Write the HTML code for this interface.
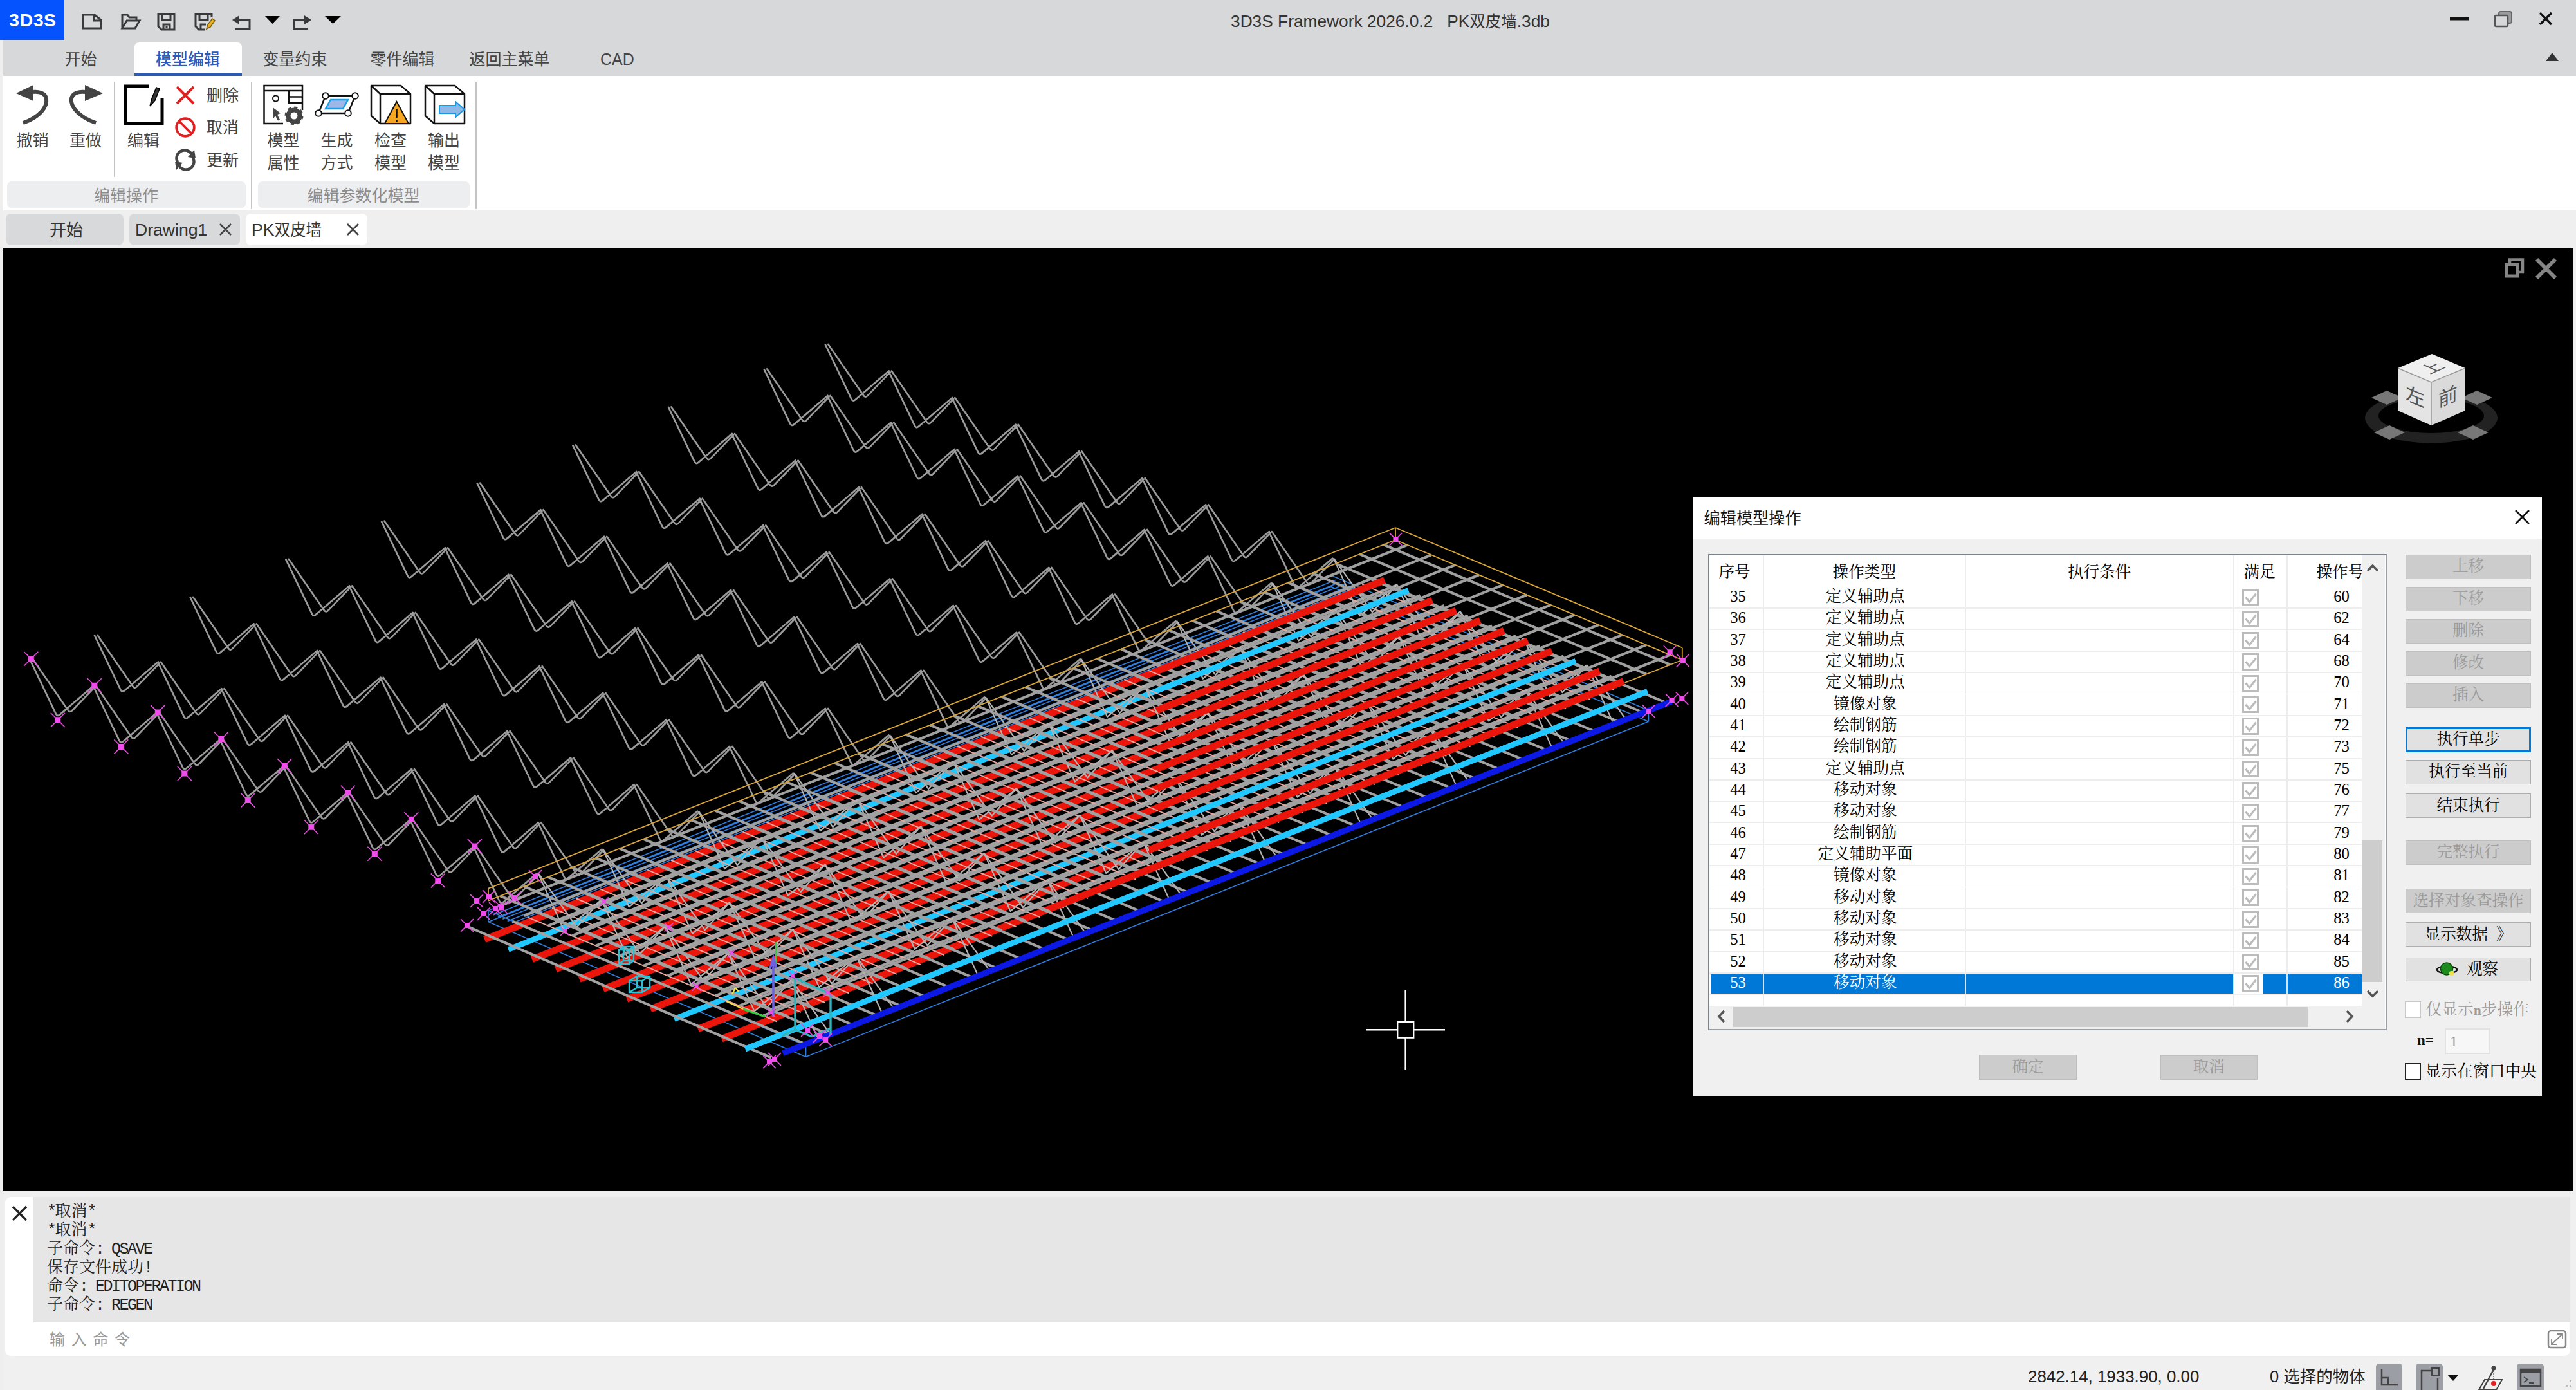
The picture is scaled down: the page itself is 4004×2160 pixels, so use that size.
<!DOCTYPE html>
<html lang="zh-CN"><head><meta charset="utf-8"><title>3D3S Framework 2026.0.2 PK双皮墙.3db</title>
<style>
*{box-sizing:border-box;margin:0;padding:0}
html,body{width:4004px;height:2160px;overflow:hidden;background:#f0f0f0}
body{position:relative;font-family:"Liberation Sans","Noto Sans CJK SC",sans-serif;color:#222;}
.a{position:absolute}
.t{position:absolute;white-space:nowrap;line-height:1}
.ui{font-family:"Liberation Sans","Noto Sans CJK SC",sans-serif}
.song{font-family:"Liberation Serif","Noto Serif CJK SC",serif}
.m{font-family:"Liberation Mono",monospace;display:inline-block;letter-spacing:-2.5px;white-space:pre}
</style></head>
<body>
<div class="a" style="left:0;top:0;width:4004px;height:118px;background:#d6d8da"></div>
<div class="a" style="left:0;top:62px;width:5px;height:2098px;background:#eeeeef"></div>
<div class="a" style="left:0;top:0;width:100px;height:62px;background:#0453ff"></div>
<div class="t ui" style="left:14px;top:19px;font-size:27px;color:#fff;font-weight:bold;letter-spacing:0.5px;transform:scaleX(1.06);transform-origin:left;">3D3S</div>
<svg class="a" style="left:0;top:0" width="700" height="62" viewBox="0 0 700 62" fill="none" stroke="#3a3a3a" stroke-width="3">
<path d="M129 23 H147 L157 31 V44 H129 Z M146 23 V32 H157"/>
<path d="M190 44 V23 H198 L201 27 H212 V31 M190 44 L197 32 H217 L210 44 Z"/>
<path d="M246 21.5 H271 V46 H251 L246 41 Z M252 22 V31 H265 V22 M254 46 V38 H264 V46" />
<rect x="257.5" y="40" width="3" height="4" fill="#3a3a3a" stroke="none"/>
<path d="M318 46 H309 L304 41 V21.5 H329 V27 M310 22 V31 H323 V22 M312 46 V38 H320"/>
<path d="M321 45 L323 38 L330 29 L334 32 L327 42 Z" fill="#e8b21e" stroke="#7a5a10" stroke-width="1.5"/>
<path d="M371 31 H388 V45.5 H366" />
<path d="M361 31 L372 24 V38 Z" fill="#3a3a3a" stroke="none"/>
<path d="M474 31 H457 V45.5 H479" />
<path d="M484 31 L473 24 V38 Z" fill="#3a3a3a" stroke="none"/>
<path d="M412 25 H435 L423.5 37 Z" fill="#000" stroke="none"/>
<path d="M505 25 H530 L517.5 37 Z" fill="#000" stroke="none"/>
</svg>
<div class="t ui" style="left:1913px;top:20px;font-size:26.3px;color:#333;">3D3S Framework 2026.0.2&nbsp;&nbsp;&nbsp;PK<span style="font-size:24.5px">双皮墙</span>.3db</div>
<svg class="a" style="left:3780px;top:0" width="224" height="118" viewBox="3780 0 224 118" fill="none">
<rect x="3808" y="26.5" width="29" height="5" fill="#111"/>
<rect x="3884" y="18" width="20" height="18" rx="3" fill="#9a9c9f" stroke="#666" stroke-width="2"/>
<rect x="3878" y="24" width="20" height="17" rx="2" fill="#d6d8da" stroke="#555" stroke-width="2.5"/>
<path d="M3948 20 L3966 38 M3966 20 L3948 38" stroke="#111" stroke-width="3.5"/>
<path d="M3957 95 H3977 L3967 82 Z" fill="#333"/>
</svg>
<div class="a" style="left:209px;top:66px;width:167px;height:52px;background:#fff;border-radius:7px 7px 0 0;border-bottom:5px solid #2a5cb8"></div>
<div class="t ui" style="left:100.5px;top:79.5px;font-size:25px;color:#444;">开始</div>
<div class="t ui" style="left:242px;top:79.5px;font-size:25px;color:#2a5cc0;font-weight:500;">模型编辑</div>
<div class="t ui" style="left:408.5px;top:79.5px;font-size:25px;color:#444;">变量约束</div>
<div class="t ui" style="left:575.5px;top:79.5px;font-size:25px;color:#444;">零件编辑</div>
<div class="t ui" style="left:729.5px;top:79.5px;font-size:25px;color:#444;">返回主菜单</div>
<div class="t ui" style="left:933px;top:79.5px;font-size:25px;color:#444;">CAD</div>
<div class="a" style="left:5px;top:118px;width:3999px;height:209px;background:#fff"></div>
<div class="a" style="left:177px;top:127px;width:2px;height:148px;background:#c4c4c4"></div>
<div class="a" style="left:390px;top:127px;width:2px;height:198px;background:#c4c4c4"></div>
<div class="a" style="left:738.5px;top:127px;width:2px;height:198px;background:#c4c4c4"></div>
<div class="a" style="left:11px;top:282px;width:371px;height:41px;background:#edeef0;border-radius:7px"></div>
<div class="a" style="left:401px;top:282px;width:329px;height:41px;background:#edeef0;border-radius:7px"></div>
<div class="t ui" style="left:146px;top:292px;font-size:25px;color:#8c8c8c;">编辑操作</div>
<div class="t ui" style="left:477.5px;top:292px;font-size:25px;color:#8c8c8c;">编辑参数化模型</div>
<div class="t ui" style="left:25.5px;top:206px;font-size:25px;color:#444;">撤销</div>
<div class="t ui" style="left:108px;top:206px;font-size:25px;color:#444;">重做</div>
<div class="t ui" style="left:198px;top:206px;font-size:25px;color:#444;">编辑</div>
<div class="t ui" style="left:415.5px;top:206px;font-size:25px;color:#444;">模型</div>
<div class="t ui" style="left:415.5px;top:241px;font-size:25px;color:#444;">属性</div>
<div class="t ui" style="left:498.5px;top:206px;font-size:25px;color:#444;">生成</div>
<div class="t ui" style="left:498.5px;top:241px;font-size:25px;color:#444;">方式</div>
<div class="t ui" style="left:582px;top:206px;font-size:25px;color:#444;">检查</div>
<div class="t ui" style="left:582px;top:241px;font-size:25px;color:#444;">模型</div>
<div class="t ui" style="left:665px;top:206px;font-size:25px;color:#444;">输出</div>
<div class="t ui" style="left:665px;top:241px;font-size:25px;color:#444;">模型</div>
<div class="t ui" style="left:321px;top:136px;font-size:25px;color:#444;">删除</div>
<div class="t ui" style="left:321px;top:186px;font-size:25px;color:#444;">取消</div>
<div class="t ui" style="left:321px;top:237px;font-size:25px;color:#444;">更新</div>
<svg class="a" style="left:0;top:118px" width="760" height="170" viewBox="0 118 760 170" fill="none">
<path d="M36 191 C62 182 74 166 72 153 C70 144 60 142 50 143" stroke="#444" stroke-width="6" fill="none"/>
<path d="M25 145 L52 132 V157 Z" fill="#444"/>
<path d="M149 191 C123 182 109 166 111 153 C113 144 123 142 133 143" stroke="#444" stroke-width="6" fill="none"/>
<path d="M160 145 L132 132 V157 Z" fill="#444"/>
<path d="M232 134 H195 V191.5 H252 V152" stroke="#000" stroke-width="5"/>
<path d="M233 165 L236 153 L243 136 L248 138 L241 156 Z" fill="#333" stroke="#000" stroke-width="1.5"/>
<path d="M275 135 L301 161 M301 135 L275 161" stroke="#e02020" stroke-width="4"/>
<circle cx="288" cy="198" r="13.8" stroke="#e02020" stroke-width="3.8"/>
<path d="M278.5 188.5 L297.5 207.5" stroke="#e02020" stroke-width="3.8"/>
<path d="M276 252 A12.5 12.5 0 0 1 298 240" stroke="#444" stroke-width="4.4"/>
<path d="M300 245 A12.5 12.5 0 0 1 278 257" stroke="#444" stroke-width="4.4"/>
<path d="M292 244 L304 246 L302 233 Z" fill="#444"/>
<path d="M284 253 L272 251 L274 264 Z" fill="#444"/>
<path d="M440 192 H410.5 V133 H470 V171 M410.5 141 H470 M449 141 V160 H470 M449 150.5 H470" stroke="#111" stroke-width="2.5"/>
<circle cx="428.5" cy="153" r="4.5" stroke="#111" stroke-width="2"/>
<path d="M424 167 L436 176 L431 178 L435 186 L432 187.5 L428 180 L425 184 Z" fill="#444"/>
<circle cx="457" cy="180" r="9" stroke="#444" stroke-width="7"/>
<circle cx="457" cy="180" r="12.5" stroke="#444" stroke-width="4" stroke-dasharray="4.9 4.9"/>
<path d="M506 149 H552 L541 176 H495 Z" stroke="#111" stroke-width="2.5"/>
<path d="M514 155 H541 L533 169 H506 Z" fill="#9fb6e8" stroke="#18a0e8" stroke-width="2.5"/>
<circle cx="506" cy="149" r="4.8" fill="#fff" stroke="#111" stroke-width="2"/>
<circle cx="552" cy="149" r="4.8" fill="#fff" stroke="#111" stroke-width="2"/>
<circle cx="541" cy="176" r="4.8" fill="#fff" stroke="#111" stroke-width="2"/>
<circle cx="495" cy="176" r="4.8" fill="#fff" stroke="#111" stroke-width="2"/>
<path d="M577 133 H623 L638 146 V192 H591 L577 180 Z M577 133 L591 146 H638 M591 146 V192" stroke="#111" stroke-width="2.5" stroke-linejoin="round"/>
<path d="M616.5 158 L635 192 H598 Z" fill="#f5a623" stroke="#111" stroke-width="2"/>
<path d="M616.5 169 V183 M616.5 186 V190" stroke="#111" stroke-width="2.5"/>
<path d="M661 133 H707 L722 146 V192 H675 L661 180 Z M661 133 L675 146 H722 M675 146 V192" stroke="#111" stroke-width="2.5" stroke-linejoin="round"/>
<path d="M683 164 H708 V158 L722 170 L708 182 V176 H683 Z" fill="#8db8e8" stroke="#1898e0" stroke-width="2"/>
</svg>
<div class="a" style="left:5px;top:327px;width:3999px;height:58px;background:#efeff0"></div>
<div class="a" style="left:9px;top:332px;width:183px;height:49px;background:#d7d9db;border-radius:8px"></div>
<div class="a" style="left:201px;top:332px;width:172px;height:49px;background:#d7d9db;border-radius:8px"></div>
<div class="a" style="left:382px;top:332px;width:189px;height:49px;background:#fff;border-radius:8px"></div>
<div class="t ui" style="left:77px;top:345px;font-size:26px;color:#333;">开始</div>
<div class="t ui" style="left:210px;top:344px;font-size:26.6px;color:#333;">Drawing1</div>
<div class="t ui" style="left:391px;top:344px;font-size:26.6px;color:#333;">PK<span style="font-size:24.5px">双皮墙</span></div>
<svg class="a" style="left:330px;top:340px" width="240" height="34" viewBox="330 340 240 34"><path d="M342 348 L359 365 M359 348 L342 365 M540 348 L557 365 M557 348 L540 365" stroke="#444" stroke-width="2.6" fill="none"/></svg>
<div class="a" id="canvas" style="left:5px;top:385px;width:3994px;height:1466px;background:#000;overflow:hidden">
<svg class="a" style="left:0;top:0" width="3994" height="1466" viewBox="5 385 3994 1466" fill="none">
<path d="M46.5 1024.9L86.9 1109.3Q89.1 1113.8 92.9 1110.6L145.3 1065.8M50.9 1024.3L105.8 1103.8Q108.6 1107.9 112.1 1104.3L147.3 1067.8M145 1066.5L185.4 1150.9Q187.6 1155.4 191.4 1152.2L243.8 1107.4M149.4 1065.9L204.3 1145.4Q207.1 1149.5 210.6 1145.9L245.8 1109.4M243.5 1108.1L283.9 1192.5Q286.1 1197 289.9 1193.8L342.3 1149M247.9 1107.5L302.8 1187Q305.6 1191.1 309.1 1187.5L344.3 1151M342 1149.7L382.4 1234.1Q384.6 1238.6 388.4 1235.4L440.8 1190.6M346.4 1149.1L401.3 1228.6Q404.1 1232.7 407.6 1229.1L442.8 1192.6M440.5 1191.3L480.9 1275.7Q483.1 1280.2 486.9 1277L539.3 1232.2M444.9 1190.7L499.8 1270.2Q502.6 1274.3 506.1 1270.7L541.3 1234.2M539 1232.9L579.4 1317.3Q581.6 1321.8 585.4 1318.6L637.8 1273.8M543.4 1232.3L598.3 1311.8Q601.1 1315.9 604.6 1312.3L639.8 1275.8M637.5 1274.5L677.9 1358.9Q680.1 1363.4 683.9 1360.2L736.3 1315.4M641.9 1273.9L696.8 1353.4Q699.6 1357.5 703.1 1353.9L738.3 1317.4M736 1316.1L776.4 1400.5Q778.6 1405 782.4 1401.8L834.8 1357M740.4 1315.5L795.3 1395Q798.1 1399.1 801.6 1395.5L836.8 1359M147.1 987.6L187.5 1072Q189.7 1076.5 193.5 1073.3L245.9 1028.5M151.5 987L206.4 1066.5Q209.2 1070.6 212.7 1067L247.9 1030.5M245.6 1029.2L286 1113.6Q288.2 1118.1 292 1114.9L344.4 1070.1M250 1028.6L304.9 1108.1Q307.7 1112.2 311.2 1108.6L346.4 1072.1M344.1 1070.8L384.5 1155.2Q386.7 1159.7 390.5 1156.5L442.9 1111.7M348.5 1070.2L403.4 1149.7Q406.2 1153.8 409.7 1150.2L444.9 1113.7M442.6 1112.4L483 1196.8Q485.2 1201.3 489 1198.1L541.4 1153.3M447 1111.8L501.9 1191.3Q504.7 1195.4 508.2 1191.8L543.4 1155.3M541.1 1154L581.5 1238.4Q583.7 1242.9 587.5 1239.7L639.9 1194.9M545.5 1153.4L600.4 1232.9Q603.2 1237 606.7 1233.4L641.9 1196.9M639.6 1195.6L680 1280Q682.2 1284.5 686 1281.3L738.4 1236.5M644 1195L698.9 1274.5Q701.7 1278.6 705.2 1275L740.4 1238.5M738.1 1237.2L778.5 1321.6Q780.7 1326.1 784.5 1322.9L836.9 1278.1M742.5 1236.6L797.4 1316.1Q800.2 1320.2 803.7 1316.6L838.9 1280.1M836.6 1278.8L877 1363.2Q879.2 1367.7 883 1364.5L935.4 1319.7M841 1278.2L895.9 1357.7Q898.7 1361.8 902.2 1358.2L937.4 1321.7M295.8 928.5L336.2 1012.9Q338.4 1017.4 342.2 1014.2L394.6 969.4M300.2 927.9L355 1007.4Q357.9 1011.5 361.3 1007.9L396.6 971.4M394.3 970.1L434.7 1054.5Q436.9 1059 440.7 1055.8L493.1 1011M398.7 969.5L453.5 1049Q456.4 1053.1 459.8 1049.5L495.1 1013M492.8 1011.7L533.2 1096.1Q535.4 1100.6 539.2 1097.4L591.6 1052.6M497.2 1011.1L552 1090.6Q554.9 1094.7 558.3 1091.1L593.6 1054.6M591.3 1053.3L631.7 1137.7Q633.9 1142.2 637.7 1139L690.1 1094.2M595.7 1052.7L650.5 1132.2Q653.4 1136.3 656.8 1132.7L692.1 1096.2M689.8 1094.9L730.2 1179.3Q732.4 1183.8 736.2 1180.6L788.6 1135.8M694.2 1094.3L749 1173.8Q751.9 1177.9 755.3 1174.3L790.6 1137.8M788.3 1136.5L828.7 1220.9Q830.9 1225.4 834.7 1222.2L887.1 1177.4M792.7 1135.9L847.5 1215.4Q850.4 1219.5 853.8 1215.9L889.1 1179.4M886.8 1178.1L927.2 1262.5Q929.4 1267 933.2 1263.8L985.6 1219M891.2 1177.5L946 1257Q948.9 1261.1 952.3 1257.5L987.6 1221M985.3 1219.7L1025.7 1304.1Q1027.9 1308.6 1031.7 1305.4L1084.1 1260.6M989.7 1219.1L1044.5 1298.6Q1047.4 1302.7 1050.8 1299.1L1086.1 1262.6M444.4 869.4L484.9 953.8Q487 958.3 490.8 955.1L543.2 910.3M448.8 868.8L503.7 948.3Q506.5 952.4 510 948.8L545.2 912.3M542.9 911L583.4 995.4Q585.5 999.9 589.3 996.7L641.7 951.9M547.3 910.4L602.2 989.9Q605 994 608.5 990.4L643.7 953.9M641.4 952.6L681.9 1037Q684 1041.5 687.8 1038.3L740.2 993.5M645.8 952L700.7 1031.5Q703.5 1035.6 707 1032L742.2 995.5M739.9 994.2L780.4 1078.6Q782.5 1083.1 786.3 1079.9L838.7 1035.1M744.3 993.6L799.2 1073.1Q802 1077.2 805.5 1073.6L840.7 1037.1M838.4 1035.8L878.9 1120.2Q881 1124.7 884.8 1121.5L937.2 1076.7M842.8 1035.2L897.7 1114.7Q900.5 1118.8 904 1115.2L939.2 1078.7M936.9 1077.4L977.4 1161.8Q979.5 1166.3 983.3 1163.1L1035.7 1118.3M941.3 1076.8L996.2 1156.3Q999 1160.4 1002.5 1156.8L1037.7 1120.3M1035.4 1119L1075.9 1203.4Q1078 1207.9 1081.8 1204.7L1134.2 1159.9M1039.8 1118.4L1094.7 1197.9Q1097.5 1202 1101 1198.4L1136.2 1161.9M1133.9 1160.6L1174.4 1245Q1176.5 1249.5 1180.3 1246.3L1232.7 1201.5M1138.3 1160L1193.2 1239.5Q1196 1243.6 1199.5 1240L1234.7 1203.5M593.1 810.3L633.5 894.7Q635.7 899.2 639.5 896L691.9 851.2M597.5 809.7L652.3 889.2Q655.2 893.3 658.7 889.7L693.9 853.2M691.6 851.9L732 936.3Q734.2 940.8 738 937.6L790.4 892.8M696 851.3L750.8 930.8Q753.7 934.9 757.2 931.3L792.4 894.8M790.1 893.5L830.5 977.9Q832.7 982.4 836.5 979.2L888.9 934.4M794.5 892.9L849.3 972.4Q852.2 976.5 855.7 972.9L890.9 936.4M888.6 935.1L929 1019.5Q931.2 1024 935 1020.8L987.4 976M893 934.5L947.8 1014Q950.7 1018.1 954.2 1014.5L989.4 978M987.1 976.7L1027.5 1061.1Q1029.7 1065.6 1033.5 1062.4L1085.9 1017.6M991.5 976.1L1046.3 1055.6Q1049.2 1059.7 1052.7 1056.1L1087.9 1019.6M1085.6 1018.3L1126 1102.7Q1128.2 1107.2 1132 1104L1184.4 1059.2M1090 1017.7L1144.8 1097.2Q1147.7 1101.3 1151.2 1097.7L1186.4 1061.2M1184.1 1059.9L1224.5 1144.3Q1226.7 1148.8 1230.5 1145.6L1282.9 1100.8M1188.5 1059.3L1243.3 1138.8Q1246.2 1142.9 1249.7 1139.3L1284.9 1102.8M1282.6 1101.5L1323 1185.9Q1325.2 1190.4 1329 1187.2L1381.4 1142.4M1287 1100.9L1341.8 1180.4Q1344.7 1184.5 1348.2 1180.9L1383.4 1144.4M741.7 751.2L782.2 835.6Q784.3 840.1 788.1 836.9L840.5 792.1M746.1 750.6L801 830.1Q803.8 834.2 807.3 830.6L842.5 794.1M840.2 792.8L880.7 877.2Q882.8 881.7 886.6 878.5L939 833.7M844.6 792.2L899.5 871.7Q902.3 875.8 905.8 872.2L941 835.7M938.7 834.4L979.2 918.8Q981.3 923.3 985.1 920.1L1037.5 875.3M943.1 833.8L998 913.3Q1000.8 917.4 1004.3 913.8L1039.5 877.3M1037.2 876L1077.7 960.4Q1079.8 964.9 1083.6 961.7L1136 916.9M1041.6 875.4L1096.5 954.9Q1099.3 959 1102.8 955.4L1138 918.9M1135.7 917.6L1176.2 1002Q1178.3 1006.5 1182.1 1003.3L1234.5 958.5M1140.1 917L1195 996.5Q1197.8 1000.6 1201.3 997L1236.5 960.5M1234.2 959.2L1274.7 1043.6Q1276.8 1048.1 1280.6 1044.9L1333 1000.1M1238.6 958.6L1293.5 1038.1Q1296.3 1042.2 1299.8 1038.6L1335 1002.1M1332.7 1000.8L1373.2 1085.2Q1375.3 1089.7 1379.1 1086.5L1431.5 1041.7M1337.1 1000.2L1392 1079.7Q1394.8 1083.8 1398.3 1080.2L1433.5 1043.7M1431.2 1042.4L1471.7 1126.8Q1473.8 1131.3 1477.6 1128.1L1530 1083.3M1435.6 1041.8L1490.5 1121.3Q1493.3 1125.4 1496.8 1121.8L1532 1085.3M890.4 692.1L930.8 776.5Q933 781 936.8 777.8L989.2 733M894.8 691.5L949.7 771Q952.5 775.1 956 771.5L991.2 735M988.9 733.7L1029.3 818.1Q1031.5 822.6 1035.3 819.4L1087.7 774.6M993.3 733.1L1048.2 812.6Q1051 816.7 1054.5 813.1L1089.7 776.6M1087.4 775.3L1127.8 859.7Q1130 864.2 1133.8 861L1186.2 816.2M1091.8 774.7L1146.7 854.2Q1149.5 858.3 1153 854.7L1188.2 818.2M1185.9 816.9L1226.3 901.3Q1228.5 905.8 1232.3 902.6L1284.7 857.8M1190.3 816.3L1245.2 895.8Q1248 899.9 1251.5 896.3L1286.7 859.8M1284.4 858.5L1324.8 942.9Q1327 947.4 1330.8 944.2L1383.2 899.4M1288.8 857.9L1343.7 937.4Q1346.5 941.5 1350 937.9L1385.2 901.4M1382.9 900.1L1423.3 984.5Q1425.5 989 1429.3 985.8L1481.7 941M1387.3 899.5L1442.2 979Q1445 983.1 1448.5 979.5L1483.7 943M1481.4 941.7L1521.8 1026.1Q1524 1030.6 1527.8 1027.4L1580.2 982.6M1485.8 941.1L1540.7 1020.6Q1543.5 1024.7 1547 1021.1L1582.2 984.6M1579.9 983.3L1620.3 1067.7Q1622.5 1072.2 1626.3 1069L1678.7 1024.2M1584.3 982.7L1639.2 1062.2Q1642 1066.3 1645.5 1062.7L1680.7 1026.2M1039.1 633L1079.5 717.4Q1081.7 721.9 1085.5 718.7L1137.9 673.9M1043.5 632.4L1098.3 711.9Q1101.2 716 1104.6 712.4L1139.9 675.9M1137.6 674.6L1178 759Q1180.2 763.5 1184 760.3L1236.4 715.5M1142 674L1196.8 753.5Q1199.7 757.6 1203.1 754L1238.4 717.5M1236.1 716.2L1276.5 800.6Q1278.7 805.1 1282.5 801.9L1334.9 757.1M1240.5 715.6L1295.3 795.1Q1298.2 799.2 1301.6 795.6L1336.9 759.1M1334.6 757.8L1375 842.2Q1377.2 846.7 1381 843.5L1433.4 798.7M1339 757.2L1393.8 836.7Q1396.7 840.8 1400.1 837.2L1435.4 800.7M1433.1 799.4L1473.5 883.8Q1475.7 888.3 1479.5 885.1L1531.9 840.3M1437.5 798.8L1492.3 878.3Q1495.2 882.4 1498.6 878.8L1533.9 842.3M1531.6 841L1572 925.4Q1574.2 929.9 1578 926.7L1630.4 881.9M1536 840.4L1590.8 919.9Q1593.7 924 1597.1 920.4L1632.4 883.9M1630.1 882.6L1670.5 967Q1672.7 971.5 1676.5 968.3L1728.9 923.5M1634.5 882L1689.3 961.5Q1692.2 965.6 1695.6 962L1730.9 925.5M1728.6 924.2L1769 1008.6Q1771.2 1013.1 1775 1009.9L1827.4 965.1M1733 923.6L1787.8 1003.1Q1790.7 1007.2 1794.1 1003.6L1829.4 967.1M1187.7 573.9L1228.2 658.3Q1230.3 662.8 1234.1 659.6L1286.5 614.8M1192.1 573.3L1247 652.8Q1249.8 656.9 1253.3 653.3L1288.5 616.8M1286.2 615.5L1326.7 699.9Q1328.8 704.4 1332.6 701.2L1385 656.4M1290.6 614.9L1345.5 694.4Q1348.3 698.5 1351.8 694.9L1387 658.4M1384.7 657.1L1425.2 741.5Q1427.3 746 1431.1 742.8L1483.5 698M1389.1 656.5L1444 736Q1446.8 740.1 1450.3 736.5L1485.5 700M1483.2 698.7L1523.7 783.1Q1525.8 787.6 1529.6 784.4L1582 739.6M1487.6 698.1L1542.5 777.6Q1545.3 781.7 1548.8 778.1L1584 741.6M1581.7 740.3L1622.2 824.7Q1624.3 829.2 1628.1 826L1680.5 781.2M1586.1 739.7L1641 819.2Q1643.8 823.3 1647.3 819.7L1682.5 783.2M1680.2 781.9L1720.7 866.3Q1722.8 870.8 1726.6 867.6L1779 822.8M1684.6 781.3L1739.5 860.8Q1742.3 864.9 1745.8 861.3L1781 824.8M1778.7 823.5L1819.2 907.9Q1821.3 912.4 1825.1 909.2L1877.5 864.4M1783.1 822.9L1838 902.4Q1840.8 906.5 1844.3 902.9L1879.5 866.4M1877.2 865.1L1917.7 949.5Q1919.8 954 1923.6 950.8L1976 906M1881.6 864.5L1936.5 944Q1939.3 948.1 1942.8 944.5L1978 908M1282.9 535.5L1323.3 619.9Q1325.5 624.4 1329.3 621.2L1381.7 576.4M1287.3 534.9L1342.2 614.4Q1345 618.5 1348.5 614.9L1383.7 578.4M1381.4 577.1L1421.8 661.5Q1424 666 1427.8 662.8L1480.2 618M1385.8 576.5L1440.7 656Q1443.5 660.1 1447 656.5L1482.2 620M1479.9 618.7L1520.3 703.1Q1522.5 707.6 1526.3 704.4L1578.7 659.6M1484.3 618.1L1539.2 697.6Q1542 701.7 1545.5 698.1L1580.7 661.6M1578.4 660.3L1618.8 744.7Q1621 749.2 1624.8 746L1677.2 701.2M1582.8 659.7L1637.7 739.2Q1640.5 743.3 1644 739.7L1679.2 703.2M1676.9 701.9L1717.3 786.3Q1719.5 790.8 1723.3 787.6L1775.7 742.8M1681.3 701.3L1736.2 780.8Q1739 784.9 1742.5 781.3L1777.7 744.8M1775.4 743.5L1815.8 827.9Q1818 832.4 1821.8 829.2L1874.2 784.4M1779.8 742.9L1834.7 822.4Q1837.5 826.5 1841 822.9L1876.2 786.4M1873.9 785.1L1914.3 869.5Q1916.5 874 1920.3 870.8L1972.7 826M1878.3 784.5L1933.2 864Q1936 868.1 1939.5 864.5L1974.7 828M1972.4 826.7L2012.8 911.1Q2015 915.6 2018.8 912.4L2071.2 867.6M1976.8 826.1L2031.7 905.6Q2034.5 909.7 2038 906.1L2073.2 869.6" stroke="#9b9b9b" stroke-width="2.7" stroke-linejoin="round" stroke-linecap="round"/>
<path d="M759 1415L2068.9 894.1M2068.9 894.1L2562.4 1103.8M2562.4 1103.8L1252.5 1624.7M1252.5 1624.7L759 1415M759 1432.5L2068.9 911.6M2068.9 911.6L2562.4 1121.3M2562.4 1121.3L1252.5 1642.2M1252.5 1642.2L759 1432.5M759 1415L759 1432.5M1252.5 1624.7L1252.5 1642.2M2562.4 1103.8L2562.4 1121.3M766.4 1422.1L2076.3 901.2M773.9 1425.2L2083.8 904.3M781.3 1428.3L2091.2 907.4M788.7 1431.4L2098.6 910.5M796.1 1434.5L2106 913.6" stroke="#2f7fe0" stroke-width="1.6"/>
<path d="M2170.5 909.6L862.6 1431.4M2207.6 925.2L899.4 1446.8M2244.8 941L936.3 1462.3M2281.9 956.7L973.2 1477.7M2319.1 972.4L1010 1493.2M2356.2 988.1L1046.9 1508.7M2393.4 1003.8L1083.8 1524.1M2430.5 1019.5L1120.6 1539.6M2467.7 1035.2L1157.5 1555.1M2504.8 1050.8L1194.4 1570.5" stroke="#a2a2a2" stroke-width="4.2"/>
<path d="M753.2 1459.9L2151.9 901.7M826.9 1490.8L2226.2 933.1M863.8 1506.2L2263.3 948.8M900.6 1521.7L2300.5 964.5M937.5 1537.2L2337.7 980.2M974.3 1552.6L2374.8 995.9M1011.2 1568.1L2412 1011.6M1084.9 1599L2486.2 1043M1121.7 1614.4L2523.4 1058.7" stroke="#ea160c" stroke-width="10.6"/><path d="M790.1 1475.4L2189.1 917.4M1048 1583.5L2449.1 1027.3M1158.6 1629.9L2560.6 1074.4" stroke="#20c8ff" stroke-width="8.6"/><path d="M1217 1636.5L2597.7 1090.1" stroke="#0c18e4" stroke-width="9"/>
<path d="M2117.3 908.2L2508.5 1071.9M2080.3 923L2471.4 1086.6M2043.2 937.8L2434.2 1101.3M2006.2 952.6L2397.1 1116.1M1969.2 967.3L2359.9 1130.8M1932.1 982.1L2322.7 1145.5M1895.1 996.9L2285.6 1160.3M1858 1011.7L2248.4 1175M1821 1026.5L2211.2 1189.7M1784 1041.3L2174.1 1204.4M1746.9 1056L2136.9 1219.2M1709.9 1070.8L2099.8 1233.9M1672.8 1085.6L2062.6 1248.6M1635.8 1100.4L2025.4 1263.4M1598.8 1115.2L1988.3 1278.1M1561.7 1129.9L1951.1 1292.8M1524.7 1144.7L1914 1307.6M1487.6 1159.5L1876.8 1322.3M1450.6 1174.3L1839.6 1337M1413.6 1189.1L1802.5 1351.8M1376.5 1203.9L1765.3 1366.5M1339.5 1218.6L1728.2 1381.2M1302.4 1233.4L1691 1396M1265.4 1248.2L1653.8 1410.7M1228.3 1263L1616.7 1425.4M1191.3 1277.8L1579.5 1440.2M1154.3 1292.6L1542.4 1454.9M1117.2 1307.3L1505.2 1469.6M1080.2 1322.1L1468 1484.4M1043.1 1336.9L1430.9 1499.1M1006.1 1351.7L1393.7 1513.8M969.1 1366.5L1356.6 1528.6M932 1381.2L1319.4 1543.3M895 1396L1282.2 1558M857.9 1410.8L1245.1 1572.8M820.9 1425.6L1207.9 1587.5" stroke="#e8a9a0" stroke-width="1.9"/>
<path d="M2129.9 899.6L2591.4 1092.6M2092.8 914.3L2554.2 1107.3M2055.8 929.1L2517 1122M2018.8 943.9L2479.8 1136.8M1981.7 958.7L2442.6 1151.5M1944.7 973.5L2405.4 1166.2M1907.6 988.2L2368.2 1180.9M1870.6 1003L2331 1195.6M1833.6 1017.8L2293.8 1210.4M1796.5 1032.6L2256.6 1225.1M1759.5 1047.4L2219.5 1239.8M1722.4 1062.2L2182.3 1254.5M1685.4 1076.9L2145.1 1269.2M1648.4 1091.7L2107.9 1283.9M1611.3 1106.5L2070.7 1298.7M1574.3 1121.3L2033.5 1313.4M1537.2 1136.1L1996.3 1328.1M1500.2 1150.9L1959.1 1342.8M1463.2 1165.6L1921.9 1357.5M1426.1 1180.4L1884.7 1372.3M1389.1 1195.2L1847.5 1387M1352 1210L1810.3 1401.7M1315 1224.8L1773.1 1416.4M1277.9 1239.5L1735.9 1431.1M1240.9 1254.3L1698.8 1445.9M1203.9 1269.1L1661.6 1460.6M1166.8 1283.9L1624.4 1475.3M1129.8 1298.7L1587.2 1490M1092.7 1313.5L1550 1504.7M1055.7 1328.2L1512.8 1519.4M1018.7 1343L1475.6 1534.2M981.6 1357.8L1438.4 1548.9M944.6 1372.6L1401.2 1563.6M907.5 1387.4L1364 1578.3M870.5 1402.2L1326.8 1593M833.5 1416.9L1289.6 1607.8M796.4 1431.7L1252.4 1622.5M725.9 1439.4L1198.9 1643.7" stroke="#a2a2a2" stroke-width="4"/>
<path d="M836.3 1356.5L877.1 1446.6L934.8 1398.1M836.3 1356.5L896.6 1440.7L934.8 1398.1M934.8 1398.1L975.6 1488.2L1033.3 1439.7M934.8 1398.1L995.1 1482.3L1033.3 1439.7M1033.3 1439.7L1074.1 1529.8L1131.8 1481.3M1033.3 1439.7L1093.6 1523.9L1131.8 1481.3M1131.8 1481.3L1172.6 1571.4L1230.3 1522.9M1131.8 1481.3L1192.1 1565.5L1230.3 1522.9M1230.3 1522.9L1271.1 1613M1230.3 1522.9L1290.6 1607.1M936.9 1319.2L977.7 1409.3L1035.4 1360.8M936.9 1319.2L997.2 1403.4L1035.4 1360.8M1035.4 1360.8L1076.2 1450.9L1133.9 1402.4M1035.4 1360.8L1095.7 1445L1133.9 1402.4M1133.9 1402.4L1174.7 1492.5L1232.4 1444M1133.9 1402.4L1194.2 1486.6L1232.4 1444M1232.4 1444L1273.2 1534.1L1330.9 1485.6M1232.4 1444L1292.7 1528.2L1330.9 1485.6M1330.9 1485.6L1371.7 1575.7M1330.9 1485.6L1391.2 1569.8M1085.6 1260.1L1126.4 1350.2L1184.1 1301.7M1085.6 1260.1L1145.9 1344.3L1184.1 1301.7M1184.1 1301.7L1224.9 1391.8L1282.6 1343.3M1184.1 1301.7L1244.4 1385.9L1282.6 1343.3M1282.6 1343.3L1323.4 1433.4L1381.1 1384.9M1282.6 1343.3L1342.9 1427.5L1381.1 1384.9M1381.1 1384.9L1421.9 1475L1479.6 1426.5M1381.1 1384.9L1441.4 1469.1L1479.6 1426.5M1479.6 1426.5L1520.4 1516.6M1479.6 1426.5L1539.9 1510.7M1234.2 1201L1275 1291.1L1332.7 1242.6M1234.2 1201L1294.5 1285.2L1332.7 1242.6M1332.7 1242.6L1373.5 1332.7L1431.2 1284.2M1332.7 1242.6L1393 1326.8L1431.2 1284.2M1431.2 1284.2L1472 1374.3L1529.7 1325.8M1431.2 1284.2L1491.5 1368.4L1529.7 1325.8M1529.7 1325.8L1570.5 1415.9L1628.2 1367.4M1529.7 1325.8L1590 1410L1628.2 1367.4M1628.2 1367.4L1669 1457.5M1628.2 1367.4L1688.5 1451.6M1382.9 1141.9L1423.7 1232L1481.4 1183.5M1382.9 1141.9L1443.2 1226.1L1481.4 1183.5M1481.4 1183.5L1522.2 1273.6L1579.9 1225.1M1481.4 1183.5L1541.7 1267.7L1579.9 1225.1M1579.9 1225.1L1620.7 1315.2L1678.4 1266.7M1579.9 1225.1L1640.2 1309.3L1678.4 1266.7M1678.4 1266.7L1719.2 1356.8L1776.9 1308.3M1678.4 1266.7L1738.7 1350.9L1776.9 1308.3M1776.9 1308.3L1817.7 1398.4M1776.9 1308.3L1837.2 1392.5M1531.5 1082.8L1572.3 1172.9L1630 1124.4M1531.5 1082.8L1591.8 1167L1630 1124.4M1630 1124.4L1670.8 1214.5L1728.5 1166M1630 1124.4L1690.3 1208.6L1728.5 1166M1728.5 1166L1769.3 1256.1L1827 1207.6M1728.5 1166L1788.8 1250.2L1827 1207.6M1827 1207.6L1867.8 1297.7L1925.5 1249.2M1827 1207.6L1887.3 1291.8L1925.5 1249.2M1925.5 1249.2L1966.3 1339.3M1925.5 1249.2L1985.8 1333.4M1680.2 1023.7L1721 1113.8L1778.7 1065.3M1680.2 1023.7L1740.5 1107.9L1778.7 1065.3M1778.7 1065.3L1819.5 1155.4L1877.2 1106.9M1778.7 1065.3L1839 1149.5L1877.2 1106.9M1877.2 1106.9L1918 1197L1975.7 1148.5M1877.2 1106.9L1937.5 1191.1L1975.7 1148.5M1975.7 1148.5L2016.5 1238.6L2074.2 1190.1M1975.7 1148.5L2036 1232.7L2074.2 1190.1M2074.2 1190.1L2115 1280.2M2074.2 1190.1L2134.5 1274.3M1828.9 964.6L1869.7 1054.7L1927.4 1006.2M1828.9 964.6L1889.2 1048.8L1927.4 1006.2M1927.4 1006.2L1968.2 1096.3L2025.9 1047.8M1927.4 1006.2L1987.7 1090.4L2025.9 1047.8M2025.9 1047.8L2066.7 1137.9L2124.4 1089.4M2025.9 1047.8L2086.2 1132L2124.4 1089.4M2124.4 1089.4L2165.2 1179.5L2222.9 1131M2124.4 1089.4L2184.7 1173.6L2222.9 1131M2222.9 1131L2263.7 1221.1M2222.9 1131L2283.2 1215.2M1977.5 905.5L2018.3 995.6L2076 947.1M1977.5 905.5L2037.8 989.7L2076 947.1M2076 947.1L2116.8 1037.2L2174.5 988.7M2076 947.1L2136.3 1031.3L2174.5 988.7M2174.5 988.7L2215.3 1078.8L2273 1030.3M2174.5 988.7L2234.8 1072.9L2273 1030.3M2273 1030.3L2313.8 1120.4L2371.5 1071.9M2273 1030.3L2333.3 1114.5L2371.5 1071.9M2371.5 1071.9L2412.3 1162M2371.5 1071.9L2431.8 1156.1M2072.7 867.1L2113.5 957.2L2171.2 908.7M2072.7 867.1L2133 951.3L2171.2 908.7M2171.2 908.7L2212 998.8L2269.7 950.3M2171.2 908.7L2231.5 992.9L2269.7 950.3M2269.7 950.3L2310.5 1040.4L2368.2 991.9M2269.7 950.3L2330 1034.5L2368.2 991.9M2368.2 991.9L2409 1082L2466.7 1033.5M2368.2 991.9L2428.5 1076.1L2466.7 1033.5M2466.7 1033.5L2507.5 1123.6M2466.7 1033.5L2527 1117.7" stroke="#b2b2b2" stroke-width="2.2" stroke-linejoin="round"/>
<path d="M2187.6 846.8L777.6 1407.5M2224.7 862.3L814.7 1423M2261.9 877.9L851.9 1438.6M2299 893.4L889 1454.1M2336.2 908.9L926.2 1469.6M2373.3 924.5L963.3 1485.2M2410.5 940L1000.5 1500.7M2447.6 955.5L1037.6 1516.2M2484.8 971.1L1074.8 1531.8M2521.9 986.6L1111.9 1547.3M2559.1 1002.2L1149.1 1562.9M2596.2 1017.7L1186.2 1578.4M2150.4 846.4L2596.2 1032.9M2113.3 861.1L2559.1 1047.6M2076.2 875.9L2522 1062.4M2039.1 890.6L2484.9 1077.1M2002 905.4L2447.8 1091.9M1964.9 920.2L2410.7 1106.6M1927.8 934.9L2373.6 1121.4M1890.7 949.7L2336.5 1136.1M1853.6 964.4L2299.4 1150.9M1816.5 979.2L2262.3 1165.7M1779.4 993.9L2225.2 1180.4M1742.3 1008.7L2188.1 1195.2M1705.2 1023.4L2151 1209.9M1668.1 1038.2L2113.9 1224.7M1631 1053L2076.8 1239.4M1593.9 1067.7L2039.7 1254.2M1556.8 1082.5L2002.6 1268.9M1519.7 1097.2L1965.5 1283.7M1482.6 1112L1928.4 1298.5M1445.4 1126.7L1891.2 1313.2M1408.3 1141.5L1854.1 1328M1371.2 1156.2L1817 1342.7M1334.1 1171L1779.9 1357.5M1297 1185.7L1742.8 1372.2M1259.9 1200.5L1705.7 1387M1222.8 1215.3L1668.6 1401.7M1185.7 1230L1631.5 1416.5M1148.6 1244.8L1594.4 1431.2M1111.5 1259.5L1557.3 1446M1074.4 1274.3L1520.2 1460.8M1037.3 1289L1483.1 1475.5M1000.2 1303.8L1446 1490.3M963.1 1318.5L1408.9 1505M926 1333.3L1371.8 1519.8M888.9 1348.1L1334.7 1534.5M851.8 1362.8L1297.6 1549.3M814.7 1377.6L1260.5 1564M777.6 1392.3L1223.4 1578.8" stroke="#a0a0a0" stroke-width="4.1"/>
<defs><clipPath id="rclip"><path d="M1800 700 H2700 V1300 H1800 Z"/></clipPath><clipPath id="rclip9"><path d="M1786 700 H2700 V1500 H1786 Z"/></clipPath><clipPath id="rclip10"><path d="M1634 700 H2700 V1500 H1634 Z"/></clipPath><clipPath id="slabclip"><path d="M759 1370.7L2169 810L2624.8 1006.5L2572.4 1133.8L1252.5 1654.7L729 1445Z"/></clipPath></defs>
<g clip-path="url(#rclip)"><path d="M753.2 1459.9L2151.9 901.7M826.9 1490.8L2226.2 933.1M863.8 1506.2L2263.3 948.8M900.6 1521.7L2300.5 964.5M937.5 1537.2L2337.7 980.2M974.3 1552.6L2374.8 995.9M1011.2 1568.1L2412 1011.6" stroke="#ea160c" stroke-width="10.6"/><path d="M790.1 1475.4L2189.1 917.4M1048 1583.5L2449.1 1027.3" stroke="#20c8ff" stroke-width="8.6"/><path d="" stroke="#0c18e4" stroke-width="9"/>
</g>
<g clip-path="url(#rclip9)"><path d="M1084.9 1599L2486.2 1043" stroke="#ea160c" stroke-width="10.6"/><path d="" stroke="#20c8ff" stroke-width="8.6"/><path d="" stroke="#0c18e4" stroke-width="9"/>
</g>
<g clip-path="url(#rclip10)"><path d="M1121.7 1614.4L2523.4 1058.7" stroke="#ea160c" stroke-width="10.6"/><path d="" stroke="#20c8ff" stroke-width="8.6"/><path d="" stroke="#0c18e4" stroke-width="9"/>
</g>
<path d="" stroke="#ea160c" stroke-width="10.6"/><path d="M1158.6 1629.9L2560.6 1074.4" stroke="#20c8ff" stroke-width="8.6"/><path d="M1217 1636.5L2597.7 1090.1" stroke="#0c18e4" stroke-width="9"/>
<path d="M759 1380.7L2169 820M2169 820L2614.8 1006.5M759 1399.7L2169 839M2169 839L2614.8 1025.5M2614.8 1025.5L2525.5 1061M759 1380.7L759 1399.7M2169 820L2169 839M2614.8 1006.5L2614.8 1025.5" stroke="#d9a638" stroke-width="1.8"/>
<path d="M962 1476h16v22h-16zM969 1471h16v22h-16zM962 1476l7 -5M978 1476l7 -5M978 1498l7 -5M962 1498l7 -5M978 1524h20v18h-20zM990 1517h20v18h-20zM978 1524l12 -7M998 1524l12 -7M998 1542l12 -7M978 1542l12 -7" stroke="#22c4d6" stroke-width="2.4"/>
<path d="M1236 1520V1600L1262 1611M1291 1545V1608M1236 1520L1291 1545M1236 1600L1215 1610M1262 1611L1291 1598" stroke="#2fb4bc" stroke-width="3.4"/>
<path d="M1129 1556L1155 1568M1138 1545l5 -10M1143 1535l5 6" stroke="#f2e04a" stroke-width="2.4"/><path d="M1155 1568L1189 1580M1206.5 1464V1499" stroke="#35c83c" stroke-width="3"/><path d="M1202 1580V1493M1197 1505L1202 1488L1207 1505" stroke="#6f62e0" stroke-width="3.6"/>
<path d="M37.3 1012.7L59.3 1034.7M59.3 1012.7L37.3 1034.7M78.8 1107.8L100.8 1129.8M100.8 1107.8L78.8 1129.8M135.8 1054.3L157.8 1076.3M157.8 1054.3L135.8 1076.3M177.3 1149.4L199.3 1171.4M199.3 1149.4L177.3 1171.4M234.3 1095.9L256.3 1117.9M256.3 1095.9L234.3 1117.9M275.8 1191L297.8 1213M297.8 1191L275.8 1213M332.8 1137.5L354.8 1159.5M354.8 1137.5L332.8 1159.5M374.3 1232.6L396.3 1254.6M396.3 1232.6L374.3 1254.6M431.3 1179.1L453.3 1201.1M453.3 1179.1L431.3 1201.1M472.8 1274.2L494.8 1296.2M494.8 1274.2L472.8 1296.2M529.8 1220.7L551.8 1242.7M551.8 1220.7L529.8 1242.7M571.3 1315.8L593.3 1337.8M593.3 1315.8L571.3 1337.8M628.3 1262.3L650.3 1284.3M650.3 1262.3L628.3 1284.3M669.8 1357.4L691.8 1379.4M691.8 1357.4L669.8 1379.4M726.8 1303.9L748.8 1325.9M748.8 1303.9L726.8 1325.9M768.3 1399L790.3 1421M790.3 1399L768.3 1421M1032.8 1434.2L1046.4 1447.8M1046.4 1434.2L1032.8 1447.8M1075.9 1526.2L1089.5 1539.8M1089.5 1526.2L1075.9 1539.8M1130.6 1474.2L1144.2 1487.8M1144.2 1474.2L1130.6 1487.8M871.2 1440.2L884.8 1453.8M884.8 1440.2L871.2 1453.8M932.2 1394.2L945.8 1407.8M945.8 1394.2L932.2 1407.8M1191.2 1566.7L1204.8 1580.3M1204.8 1566.7L1191.2 1580.3M1225.2 1509.2L1238.8 1522.8M1238.8 1509.2L1225.2 1522.8M1280.2 1535.2L1293.8 1548.8M1293.8 1535.2L1280.2 1548.8M2159.6 828.1L2179.4 847.9M2179.4 828.1L2159.6 847.9M2585.8 1003.3L2605.6 1023.1M2605.6 1003.3L2585.8 1023.1M2605.9 1016.3L2625.7 1036.1M2625.7 1016.3L2605.9 1036.1M2604.5 1075.3L2624.3 1095.1M2624.3 1075.3L2604.5 1095.1M2588.7 1078.1L2608.5 1097.9M2608.5 1078.1L2588.7 1097.9M2552.7 1095.4L2572.5 1115.2M2572.5 1095.4L2552.7 1115.2M750.1 1383.1L769.9 1402.9M769.9 1383.1L750.1 1402.9M731.1 1390.1L750.9 1409.9M750.9 1390.1L731.1 1409.9M716.1 1428.1L735.9 1447.9M735.9 1428.1L716.1 1447.9M742.1 1410.1L761.9 1429.9M761.9 1410.1L742.1 1429.9M760.1 1402.1L779.9 1421.9M779.9 1402.1L760.1 1421.9M790.1 1385.1L809.9 1404.9M809.9 1385.1L790.1 1404.9M822.1 1352.1L841.9 1371.9M841.9 1352.1L822.1 1371.9M1194.1 1636.1L1213.9 1655.9M1213.9 1636.1L1194.1 1655.9M1186.1 1640.1L1205.9 1659.9M1205.9 1640.1L1186.1 1659.9M1273.1 1606.1L1292.9 1625.9M1292.9 1606.1L1273.1 1625.9M1264.1 1600.1L1283.9 1619.9M1283.9 1600.1L1264.1 1619.9M1245.1 1591.1L1264.9 1610.9M1264.9 1591.1L1245.1 1610.9" stroke="#e84ae0" stroke-width="1.6"/>
<path d="M43.8 1019.2h9v9h-9zM85.3 1114.3h9v9h-9zM142.3 1060.8h9v9h-9zM183.8 1155.9h9v9h-9zM240.8 1102.4h9v9h-9zM282.3 1197.5h9v9h-9zM339.3 1144h9v9h-9zM380.8 1239.1h9v9h-9zM437.8 1185.6h9v9h-9zM479.3 1280.7h9v9h-9zM536.3 1227.2h9v9h-9zM577.8 1322.3h9v9h-9zM634.8 1268.8h9v9h-9zM676.3 1363.9h9v9h-9zM733.3 1310.4h9v9h-9zM774.8 1405.5h9v9h-9zM1036.8 1438.2h5.6v5.6h-5.6zM1079.9 1530.2h5.6v5.6h-5.6zM1134.6 1478.2h5.6v5.6h-5.6zM875.2 1444.2h5.6v5.6h-5.6zM936.2 1398.2h5.6v5.6h-5.6zM1195.2 1570.7h5.6v5.6h-5.6zM1229.2 1513.2h5.6v5.6h-5.6zM1284.2 1539.2h5.6v5.6h-5.6zM2165.4 834h8.1v8.1h-8.1zM2591.6 1009.2h8.1v8.1h-8.1zM2611.8 1022.2h8.1v8.1h-8.1zM2610.3 1081.2h8.1v8.1h-8.1zM2594.5 1084h8.1v8.1h-8.1zM2558.5 1101.2h8.1v8.1h-8.1zM756 1389h8.1v8.1h-8.1zM737 1396h8.1v8.1h-8.1zM722 1434h8.1v8.1h-8.1zM748 1416h8.1v8.1h-8.1zM766 1408h8.1v8.1h-8.1zM796 1391h8.1v8.1h-8.1zM828 1358h8.1v8.1h-8.1zM1200 1642h8.1v8.1h-8.1zM1192 1646h8.1v8.1h-8.1zM1279 1612h8.1v8.1h-8.1zM1270 1606h8.1v8.1h-8.1zM1251 1597h8.1v8.1h-8.1z" fill="#f04cec"/>
<ellipse cx="3779" cy="649.5" rx="103" ry="39" fill="#222"/><ellipse cx="3779" cy="646" rx="82" ry="27" fill="#000"/>
<path d="M3686 618 L3710 607 L3734 618 L3710 629 Z" fill="#777"/>
<path d="M3826 618 L3850 607 L3874 618 L3850 629 Z" fill="#777"/>
<path d="M3690 672 L3714 661 L3738 672 L3714 683 Z" fill="#777"/>
<path d="M3820 672 L3844 661 L3868 672 L3844 683 Z" fill="#777"/>
<path d="M3780 550 L3832 572 L3779 594 L3727 572 Z" fill="#efefef"/>
<path d="M3727 572 L3779 594 L3779 661 L3727 638 Z" fill="#e4e4e4"/>
<path d="M3832 572 L3779 594 L3779 661 L3832 638 Z" fill="#dadada"/>
<path d="M3779 594 L3779 661 M3727 572 L3779 594 L3832 572" stroke="#999" stroke-width="1.5"/>
<text x="3754" y="627" font-family="Liberation Sans, Noto Sans CJK SC, sans-serif" font-size="30" fill="#555" text-anchor="middle" transform="matrix(1 0.42 0 1 0 -1576.7)">左</text>
<text x="3805" y="627" font-family="Liberation Sans, Noto Sans CJK SC, sans-serif" font-size="30" fill="#555" text-anchor="middle" transform="matrix(1 -0.42 0 1 0 1598.1)">前</text>
<text x="3780" y="585" font-family="Liberation Sans, Noto Sans CJK SC, sans-serif" font-size="36" fill="#555" text-anchor="middle" transform="translate(3780 572) scale(1 0.45) rotate(-45) translate(-3780 -572)">上</text>
<path d="M3901 410 V403.5 H3921 V423 H3915" stroke="#858585" stroke-width="4.5"/><rect x="3895.5" y="411" width="18" height="18" stroke="#858585" stroke-width="5"/>
<path d="M3943 403 L3972 432 M3972 403 L3943 432" stroke="#858585" stroke-width="6"/>
<path d="M2123 1600.2 H2246 M2184.6 1538.6 V1662" stroke="#fff" stroke-width="2.4"/><rect x="2172.2" y="1588" width="25" height="24.6" stroke="#fff" stroke-width="2.4" fill="#000"/>
</svg>
</div>
<div class="a" style="left:2631.5px;top:773px;width:1319.8px;height:930px;background:#f0f0f0"></div>
<div class="a" style="left:2631.5px;top:773px;width:1319.8px;height:63.5px;background:#fff"></div>
<div class="t ui" style="left:2648.5px;top:792.5px;font-size:25.2px;color:#111">编辑模型操作</div>
<svg class="a" style="left:3900px;top:784px" width="40" height="40" viewBox="3900 784 40 40"><path d="M3910 793 L3931 814 M3931 793 L3910 814" stroke="#111" stroke-width="2.6" fill="none"/></svg>
<div class="a" style="left:2655px;top:860.5px;width:1054.5px;height:740.0px;background:#fff;border:2px solid #7d828c;border-right-color:#9a9ea6;border-bottom-color:#9a9ea6"></div>
<div class="a" style="left:2740.0px;top:863px;width:2px;height:700px;background:#ececec"></div>
<div class="a" style="left:3053.6px;top:863px;width:2px;height:700px;background:#ececec"></div>
<div class="a" style="left:3470.7px;top:863px;width:2px;height:700px;background:#ececec"></div>
<div class="a" style="left:3553.8px;top:863px;width:2px;height:700px;background:#ececec"></div>
<div class="t song" style="left:2396.0px;width:600px;text-align:center;top:877.4px;font-size:24.6px;color:#000;">序号</div>
<div class="t song" style="left:2597.8px;width:600px;text-align:center;top:877.4px;font-size:24.6px;color:#000;">操作类型</div>
<div class="t song" style="left:2963.1px;width:600px;text-align:center;top:877.4px;font-size:24.6px;color:#000;">执行条件</div>
<div class="t song" style="left:3212.2px;width:600px;text-align:center;top:877.4px;font-size:24.6px;color:#000;">满足</div>
<div class="a" style="left:3556px;top:864px;width:115.3px;height:48px;overflow:hidden"><div class="t song" style="left:44.5px;top:12.7px;font-size:24.6px;color:#000">操作号</div></div>
<div class="a" style="left:2657px;top:944.3px;width:1014.3px;height:1.6px;background:#ededed"></div>
<div class="t song" style="left:2401.5px;width:600px;text-align:center;top:914.9px;font-size:24.6px;color:#000;">35</div>
<div class="t song" style="left:2599.3px;width:600px;text-align:center;top:914.9px;font-size:24.6px;color:#000;">定义辅助点</div>
<div class="t song" style="left:3339.5px;width:600px;text-align:center;top:914.9px;font-size:24.6px;color:#000;">60</div>
<div class="a" style="left:3484.5px;top:915.2px;width:26.5px;height:26.5px;border:3.2px solid #bcbcbc;background:#fff"></div>
<div class="a" style="left:2657px;top:977.7px;width:1014.3px;height:1.6px;background:#ededed"></div>
<div class="t song" style="left:2401.5px;width:600px;text-align:center;top:948.2px;font-size:24.6px;color:#000;">36</div>
<div class="t song" style="left:2599.3px;width:600px;text-align:center;top:948.2px;font-size:24.6px;color:#000;">定义辅助点</div>
<div class="t song" style="left:3339.5px;width:600px;text-align:center;top:948.2px;font-size:24.6px;color:#000;">62</div>
<div class="a" style="left:3484.5px;top:948.5px;width:26.5px;height:26.5px;border:3.2px solid #bcbcbc;background:#fff"></div>
<div class="a" style="left:2657px;top:1011.0px;width:1014.3px;height:1.6px;background:#ededed"></div>
<div class="t song" style="left:2401.5px;width:600px;text-align:center;top:981.6px;font-size:24.6px;color:#000;">37</div>
<div class="t song" style="left:2599.3px;width:600px;text-align:center;top:981.6px;font-size:24.6px;color:#000;">定义辅助点</div>
<div class="t song" style="left:3339.5px;width:600px;text-align:center;top:981.6px;font-size:24.6px;color:#000;">64</div>
<div class="a" style="left:3484.5px;top:981.9px;width:26.5px;height:26.5px;border:3.2px solid #bcbcbc;background:#fff"></div>
<div class="a" style="left:2657px;top:1044.3px;width:1014.3px;height:1.6px;background:#ededed"></div>
<div class="t song" style="left:2401.5px;width:600px;text-align:center;top:1014.9px;font-size:24.6px;color:#000;">38</div>
<div class="t song" style="left:2599.3px;width:600px;text-align:center;top:1014.9px;font-size:24.6px;color:#000;">定义辅助点</div>
<div class="t song" style="left:3339.5px;width:600px;text-align:center;top:1014.9px;font-size:24.6px;color:#000;">68</div>
<div class="a" style="left:3484.5px;top:1015.2px;width:26.5px;height:26.5px;border:3.2px solid #bcbcbc;background:#fff"></div>
<div class="a" style="left:2657px;top:1077.7px;width:1014.3px;height:1.6px;background:#ededed"></div>
<div class="t song" style="left:2401.5px;width:600px;text-align:center;top:1048.2px;font-size:24.6px;color:#000;">39</div>
<div class="t song" style="left:2599.3px;width:600px;text-align:center;top:1048.2px;font-size:24.6px;color:#000;">定义辅助点</div>
<div class="t song" style="left:3339.5px;width:600px;text-align:center;top:1048.2px;font-size:24.6px;color:#000;">70</div>
<div class="a" style="left:3484.5px;top:1048.5px;width:26.5px;height:26.5px;border:3.2px solid #bcbcbc;background:#fff"></div>
<div class="a" style="left:2657px;top:1111.0px;width:1014.3px;height:1.6px;background:#ededed"></div>
<div class="t song" style="left:2401.5px;width:600px;text-align:center;top:1081.6px;font-size:24.6px;color:#000;">40</div>
<div class="t song" style="left:2599.3px;width:600px;text-align:center;top:1081.6px;font-size:24.6px;color:#000;">镜像对象</div>
<div class="t song" style="left:3339.5px;width:600px;text-align:center;top:1081.6px;font-size:24.6px;color:#000;">71</div>
<div class="a" style="left:3484.5px;top:1081.9px;width:26.5px;height:26.5px;border:3.2px solid #bcbcbc;background:#fff"></div>
<div class="a" style="left:2657px;top:1144.3px;width:1014.3px;height:1.6px;background:#ededed"></div>
<div class="t song" style="left:2401.5px;width:600px;text-align:center;top:1114.9px;font-size:24.6px;color:#000;">41</div>
<div class="t song" style="left:2599.3px;width:600px;text-align:center;top:1114.9px;font-size:24.6px;color:#000;">绘制钢筋</div>
<div class="t song" style="left:3339.5px;width:600px;text-align:center;top:1114.9px;font-size:24.6px;color:#000;">72</div>
<div class="a" style="left:3484.5px;top:1115.2px;width:26.5px;height:26.5px;border:3.2px solid #bcbcbc;background:#fff"></div>
<div class="a" style="left:2657px;top:1177.7px;width:1014.3px;height:1.6px;background:#ededed"></div>
<div class="t song" style="left:2401.5px;width:600px;text-align:center;top:1148.2px;font-size:24.6px;color:#000;">42</div>
<div class="t song" style="left:2599.3px;width:600px;text-align:center;top:1148.2px;font-size:24.6px;color:#000;">绘制钢筋</div>
<div class="t song" style="left:3339.5px;width:600px;text-align:center;top:1148.2px;font-size:24.6px;color:#000;">73</div>
<div class="a" style="left:3484.5px;top:1148.5px;width:26.5px;height:26.5px;border:3.2px solid #bcbcbc;background:#fff"></div>
<div class="a" style="left:2657px;top:1211.0px;width:1014.3px;height:1.6px;background:#ededed"></div>
<div class="t song" style="left:2401.5px;width:600px;text-align:center;top:1181.6px;font-size:24.6px;color:#000;">43</div>
<div class="t song" style="left:2599.3px;width:600px;text-align:center;top:1181.6px;font-size:24.6px;color:#000;">定义辅助点</div>
<div class="t song" style="left:3339.5px;width:600px;text-align:center;top:1181.6px;font-size:24.6px;color:#000;">75</div>
<div class="a" style="left:3484.5px;top:1181.9px;width:26.5px;height:26.5px;border:3.2px solid #bcbcbc;background:#fff"></div>
<div class="a" style="left:2657px;top:1244.3px;width:1014.3px;height:1.6px;background:#ededed"></div>
<div class="t song" style="left:2401.5px;width:600px;text-align:center;top:1214.9px;font-size:24.6px;color:#000;">44</div>
<div class="t song" style="left:2599.3px;width:600px;text-align:center;top:1214.9px;font-size:24.6px;color:#000;">移动对象</div>
<div class="t song" style="left:3339.5px;width:600px;text-align:center;top:1214.9px;font-size:24.6px;color:#000;">76</div>
<div class="a" style="left:3484.5px;top:1215.2px;width:26.5px;height:26.5px;border:3.2px solid #bcbcbc;background:#fff"></div>
<div class="a" style="left:2657px;top:1277.7px;width:1014.3px;height:1.6px;background:#ededed"></div>
<div class="t song" style="left:2401.5px;width:600px;text-align:center;top:1248.2px;font-size:24.6px;color:#000;">45</div>
<div class="t song" style="left:2599.3px;width:600px;text-align:center;top:1248.2px;font-size:24.6px;color:#000;">移动对象</div>
<div class="t song" style="left:3339.5px;width:600px;text-align:center;top:1248.2px;font-size:24.6px;color:#000;">77</div>
<div class="a" style="left:3484.5px;top:1248.5px;width:26.5px;height:26.5px;border:3.2px solid #bcbcbc;background:#fff"></div>
<div class="a" style="left:2657px;top:1311.0px;width:1014.3px;height:1.6px;background:#ededed"></div>
<div class="t song" style="left:2401.5px;width:600px;text-align:center;top:1281.6px;font-size:24.6px;color:#000;">46</div>
<div class="t song" style="left:2599.3px;width:600px;text-align:center;top:1281.6px;font-size:24.6px;color:#000;">绘制钢筋</div>
<div class="t song" style="left:3339.5px;width:600px;text-align:center;top:1281.6px;font-size:24.6px;color:#000;">79</div>
<div class="a" style="left:3484.5px;top:1281.9px;width:26.5px;height:26.5px;border:3.2px solid #bcbcbc;background:#fff"></div>
<div class="a" style="left:2657px;top:1344.4px;width:1014.3px;height:1.6px;background:#ededed"></div>
<div class="t song" style="left:2401.5px;width:600px;text-align:center;top:1314.9px;font-size:24.6px;color:#000;">47</div>
<div class="t song" style="left:2599.3px;width:600px;text-align:center;top:1314.9px;font-size:24.6px;color:#000;">定义辅助平面</div>
<div class="t song" style="left:3339.5px;width:600px;text-align:center;top:1314.9px;font-size:24.6px;color:#000;">80</div>
<div class="a" style="left:3484.5px;top:1315.2px;width:26.5px;height:26.5px;border:3.2px solid #bcbcbc;background:#fff"></div>
<div class="a" style="left:2657px;top:1377.7px;width:1014.3px;height:1.6px;background:#ededed"></div>
<div class="t song" style="left:2401.5px;width:600px;text-align:center;top:1348.3px;font-size:24.6px;color:#000;">48</div>
<div class="t song" style="left:2599.3px;width:600px;text-align:center;top:1348.3px;font-size:24.6px;color:#000;">镜像对象</div>
<div class="t song" style="left:3339.5px;width:600px;text-align:center;top:1348.3px;font-size:24.6px;color:#000;">81</div>
<div class="a" style="left:3484.5px;top:1348.6px;width:26.5px;height:26.5px;border:3.2px solid #bcbcbc;background:#fff"></div>
<div class="a" style="left:2657px;top:1411.0px;width:1014.3px;height:1.6px;background:#ededed"></div>
<div class="t song" style="left:2401.5px;width:600px;text-align:center;top:1381.6px;font-size:24.6px;color:#000;">49</div>
<div class="t song" style="left:2599.3px;width:600px;text-align:center;top:1381.6px;font-size:24.6px;color:#000;">移动对象</div>
<div class="t song" style="left:3339.5px;width:600px;text-align:center;top:1381.6px;font-size:24.6px;color:#000;">82</div>
<div class="a" style="left:3484.5px;top:1381.9px;width:26.5px;height:26.5px;border:3.2px solid #bcbcbc;background:#fff"></div>
<div class="a" style="left:2657px;top:1444.4px;width:1014.3px;height:1.6px;background:#ededed"></div>
<div class="t song" style="left:2401.5px;width:600px;text-align:center;top:1414.9px;font-size:24.6px;color:#000;">50</div>
<div class="t song" style="left:2599.3px;width:600px;text-align:center;top:1414.9px;font-size:24.6px;color:#000;">移动对象</div>
<div class="t song" style="left:3339.5px;width:600px;text-align:center;top:1414.9px;font-size:24.6px;color:#000;">83</div>
<div class="a" style="left:3484.5px;top:1415.2px;width:26.5px;height:26.5px;border:3.2px solid #bcbcbc;background:#fff"></div>
<div class="a" style="left:2657px;top:1477.7px;width:1014.3px;height:1.6px;background:#ededed"></div>
<div class="t song" style="left:2401.5px;width:600px;text-align:center;top:1448.3px;font-size:24.6px;color:#000;">51</div>
<div class="t song" style="left:2599.3px;width:600px;text-align:center;top:1448.3px;font-size:24.6px;color:#000;">移动对象</div>
<div class="t song" style="left:3339.5px;width:600px;text-align:center;top:1448.3px;font-size:24.6px;color:#000;">84</div>
<div class="a" style="left:3484.5px;top:1448.6px;width:26.5px;height:26.5px;border:3.2px solid #bcbcbc;background:#fff"></div>
<div class="a" style="left:2657px;top:1511.0px;width:1014.3px;height:1.6px;background:#ededed"></div>
<div class="t song" style="left:2401.5px;width:600px;text-align:center;top:1481.6px;font-size:24.6px;color:#000;">52</div>
<div class="t song" style="left:2599.3px;width:600px;text-align:center;top:1481.6px;font-size:24.6px;color:#000;">移动对象</div>
<div class="t song" style="left:3339.5px;width:600px;text-align:center;top:1481.6px;font-size:24.6px;color:#000;">85</div>
<div class="a" style="left:3484.5px;top:1481.9px;width:26.5px;height:26.5px;border:3.2px solid #bcbcbc;background:#fff"></div>
<div class="a" style="left:2658.5px;top:1513.8px;width:1012.8px;height:31px;background:#0078d7"></div>
<div class="a" style="left:3471.7px;top:1513.8px;width:46.3px;height:31px;background:#fff"></div>
<div class="a" style="left:2740.0px;top:1513.8px;width:2px;height:31px;background:#cfe6fa"></div>
<div class="a" style="left:3053.6px;top:1513.8px;width:2px;height:31px;background:#cfe6fa"></div>
<div class="a" style="left:3470.7px;top:1513.8px;width:2px;height:31px;background:#cfe6fa"></div>
<div class="a" style="left:3553.8px;top:1513.8px;width:2px;height:31px;background:#cfe6fa"></div>
<div class="a" style="left:2657px;top:1544.4px;width:1014.3px;height:1.6px;background:#ededed"></div>
<div class="t song" style="left:2401.5px;width:600px;text-align:center;top:1514.9px;font-size:24.6px;color:#fff;">53</div>
<div class="t song" style="left:2599.3px;width:600px;text-align:center;top:1514.9px;font-size:24.6px;color:#fff;">移动对象</div>
<div class="t song" style="left:3339.5px;width:600px;text-align:center;top:1514.9px;font-size:24.6px;color:#fff;">86</div>
<div class="a" style="left:3484.5px;top:1515.2px;width:26.5px;height:26.5px;border:3.2px solid #bcbcbc;background:#fff"></div>
<svg class="a" style="left:3480px;top:910px" width="40" height="640" viewBox="3480 910 40 640" fill="none" stroke="#bcbcbc" stroke-width="3.2">
<path d="M3490.5 928.2 L3496.5 935.2 L3506.5 922.7 M3490.5 961.5 L3496.5 968.5 L3506.5 956.0 M3490.5 994.9 L3496.5 1001.9 L3506.5 989.4 M3490.5 1028.2 L3496.5 1035.2 L3506.5 1022.7 M3490.5 1061.5 L3496.5 1068.5 L3506.5 1056.0 M3490.5 1094.9 L3496.5 1101.9 L3506.5 1089.4 M3490.5 1128.2 L3496.5 1135.2 L3506.5 1122.7 M3490.5 1161.5 L3496.5 1168.5 L3506.5 1156.0 M3490.5 1194.9 L3496.5 1201.9 L3506.5 1189.4 M3490.5 1228.2 L3496.5 1235.2 L3506.5 1222.7 M3490.5 1261.5 L3496.5 1268.5 L3506.5 1256.0 M3490.5 1294.9 L3496.5 1301.9 L3506.5 1289.4 M3490.5 1328.2 L3496.5 1335.2 L3506.5 1322.7 M3490.5 1361.6 L3496.5 1368.6 L3506.5 1356.1 M3490.5 1394.9 L3496.5 1401.9 L3506.5 1389.4 M3490.5 1428.2 L3496.5 1435.2 L3506.5 1422.7 M3490.5 1461.6 L3496.5 1468.6 L3506.5 1456.1 M3490.5 1494.9 L3496.5 1501.9 L3506.5 1489.4 M3490.5 1528.2 L3496.5 1535.2 L3506.5 1522.7 "/></svg>
<div class="a" style="left:3671.3px;top:862.5px;width:36.2px;height:736px;background:#f0f0f0"></div>
<div class="a" style="left:3672.4px;top:1305.6px;width:31px;height:220px;background:#cdcdcd"></div>
<div class="a" style="left:2657px;top:1563px;width:1014.3px;height:35.5px;background:#f0f0f0"></div>
<div class="a" style="left:2694px;top:1564.5px;width:894px;height:31px;background:#cdcdcd"></div>
<svg class="a" style="left:2655px;top:860px" width="1056" height="742" viewBox="2655 860 1056 742" fill="none" stroke="#555" stroke-width="3.6"><path d="M3680 887 L3688 879 L3696 887 M3680 1540 L3688 1548 L3696 1540 M2680 1571 L2672 1579.5 L2680 1588 M3648 1571 L3656 1579.5 L3648 1588"/></svg>
<div class="a" style="left:3738.8px;top:861.7px;width:195.5px;height:38.3px;background:#cccccc;border:1.5px solid #bfbfbf;"></div>
<div class="t song" style="left:3536.6px;width:600px;text-align:center;top:868.3px;font-size:24.6px;color:#9b9b9b;">上移</div>
<div class="a" style="left:3738.8px;top:911.7px;width:195.5px;height:38.3px;background:#cccccc;border:1.5px solid #bfbfbf;"></div>
<div class="t song" style="left:3536.6px;width:600px;text-align:center;top:918.3px;font-size:24.6px;color:#9b9b9b;">下移</div>
<div class="a" style="left:3738.8px;top:961.8px;width:195.5px;height:38.2px;background:#cccccc;border:1.5px solid #bfbfbf;"></div>
<div class="t song" style="left:3536.6px;width:600px;text-align:center;top:968.3px;font-size:24.6px;color:#9b9b9b;">删除</div>
<div class="a" style="left:3738.8px;top:1011.5px;width:195.5px;height:38.3px;background:#cccccc;border:1.5px solid #bfbfbf;"></div>
<div class="t song" style="left:3536.6px;width:600px;text-align:center;top:1018.1px;font-size:24.6px;color:#9b9b9b;">修改</div>
<div class="a" style="left:3738.8px;top:1061.6px;width:195.5px;height:38.2px;background:#cccccc;border:1.5px solid #bfbfbf;"></div>
<div class="t song" style="left:3536.6px;width:600px;text-align:center;top:1068.1px;font-size:24.6px;color:#9b9b9b;">插入</div>
<div class="a" style="left:3738.8px;top:1130.0px;width:195.5px;height:39.0px;background:#e1e1e1;border:3.5px solid #0078d7;"></div>
<div class="t song" style="left:3536.6px;width:600px;text-align:center;top:1136.9px;font-size:24.6px;color:#000;">执行单步</div>
<div class="a" style="left:3738.8px;top:1180.7px;width:195.5px;height:38.3px;background:#e1e1e1;border:1.5px solid #adadad;"></div>
<div class="t song" style="left:3536.6px;width:600px;text-align:center;top:1187.2px;font-size:24.6px;color:#000;">执行至当前</div>
<div class="a" style="left:3738.8px;top:1233.0px;width:195.5px;height:38.4px;background:#e1e1e1;border:1.5px solid #adadad;"></div>
<div class="t song" style="left:3536.6px;width:600px;text-align:center;top:1239.6px;font-size:24.6px;color:#000;">结束执行</div>
<div class="a" style="left:3738.8px;top:1305.6px;width:195.5px;height:38.4px;background:#cccccc;border:1.5px solid #bfbfbf;"></div>
<div class="t song" style="left:3536.6px;width:600px;text-align:center;top:1312.2px;font-size:24.6px;color:#9b9b9b;">完整执行</div>
<div class="a" style="left:3738.8px;top:1380.8px;width:195.5px;height:38.5px;background:#cccccc;border:1.5px solid #bfbfbf;"></div>
<div class="t song" style="left:3536.6px;width:600px;text-align:center;top:1387.5px;font-size:24.6px;color:#9b9b9b;">选择对象查操作</div>
<div class="a" style="left:3738.8px;top:1433.0px;width:195.5px;height:38.3px;background:#e1e1e1;border:1.5px solid #adadad;"></div>
<div class="t song" style="left:3536.6px;width:600px;text-align:center;top:1439.6px;font-size:24.6px;color:#000;">显示数据<span style="display:inline-block;width:13px"></span>》</div>
<div class="a" style="left:3738.8px;top:1487.6px;width:195.5px;height:37.4px;background:#e1e1e1;border:1.5px solid #adadad;"></div>
<div class="t song" style="left:3834px;top:1493.5px;font-size:24.6px;color:#000">观察</div>
<svg class="a" style="left:3784px;top:1490px" width="40" height="34" viewBox="3784 1490 40 34" fill="none"><ellipse cx="3803.5" cy="1507" rx="15.5" ry="5.5" stroke="#111" stroke-width="2.4"/><circle cx="3803" cy="1505.5" r="9.5" fill="#1c8a1c" stroke="#0a4a0a" stroke-width="1.5"/><circle cx="3810.5" cy="1512.5" r="3.6" fill="#f4e04a"/></svg>
<div class="a" style="left:3076.0px;top:1639.0px;width:152.0px;height:39.0px;background:#cccccc;border:1.5px solid #bfbfbf;"></div>
<div class="t song" style="left:2852.0px;width:600px;text-align:center;top:1645.9px;font-size:24.6px;color:#9b9b9b;">确定</div>
<div class="a" style="left:3357.6px;top:1639.6px;width:151.7px;height:38.4px;background:#cccccc;border:1.5px solid #bfbfbf;"></div>
<div class="t song" style="left:3133.4px;width:600px;text-align:center;top:1646.2px;font-size:24.6px;color:#9b9b9b;">取消</div>
<div class="a" style="left:3737.6px;top:1556.3px;width:25.6px;height:25.6px;background:#fff;border:1.5px solid #c8c8c8"></div>
<div class="t song" style="left:3770.5px;top:1556.5px;font-size:24.6px;color:#9a9a9a;letter-spacing:0.2px">仅显示<span style="font-size:21px;font-weight:bold">n</span>步操作</div>
<div class="t song" style="left:3757px;top:1604.5px;font-size:23px;color:#111;font-weight:bold">n=</div>
<div class="a" style="left:3799.6px;top:1597.8px;width:71.8px;height:40px;background:#f7f7f7;border:2px solid #e2e2e2"></div>
<div class="t song" style="left:3808px;top:1606px;font-size:24px;color:#9a9a9a">1</div>
<div class="a" style="left:3737.6px;top:1652.4px;width:25.6px;height:25.6px;background:#fff;border:2.2px solid #222"></div>
<div class="t song" style="left:3769.5px;top:1653px;font-size:24.8px;color:#000">显示在窗口中央</div>
<div class="a" style="left:8px;top:1860px;width:3987px;height:247px;background:#fff;border-radius:9px"></div>
<div class="a" style="left:52px;top:1860px;width:3943px;height:195px;background:#e6e6e6"></div>
<svg class="a" style="left:14px;top:1868px" width="34" height="34" viewBox="14 1868 34 34"><path d="M20 1875 L41 1896 M41 1875 L20 1896" stroke="#222" stroke-width="3.4" fill="none"/></svg>
<div class="t song" style="left:73px;top:1869.0px;font-size:25px;color:#222;letter-spacing:0px"><span class="m">*</span>取消<span class="m">*</span></div>
<div class="t song" style="left:73px;top:1898.0px;font-size:25px;color:#222;letter-spacing:0px"><span class="m">*</span>取消<span class="m">*</span></div>
<div class="t song" style="left:73px;top:1927.1px;font-size:25px;color:#222;letter-spacing:0px">子命令<span class="m">: QSAVE</span></div>
<div class="t song" style="left:73px;top:1956.2px;font-size:25px;color:#222;letter-spacing:0px">保存文件成功<span class="m">!</span></div>
<div class="t song" style="left:73px;top:1985.2px;font-size:25px;color:#222;letter-spacing:0px">命令<span class="m">: EDITOPERATION</span></div>
<div class="t song" style="left:73px;top:2014.2px;font-size:25px;color:#222;letter-spacing:0px">子命令<span class="m">: REGEN</span></div>
<div class="t ui" style="left:77px;top:2070px;font-size:24px;color:#9a9a9a;letter-spacing:9.7px">输入命令</div>
<svg class="a" style="left:3956px;top:2064px" width="36" height="34" viewBox="3956 2064 36 34" fill="none"><rect x="3961" y="2068" width="27" height="26" rx="4" stroke="#888" stroke-width="2.5"/><path d="M3967 2088 L3982 2074 M3975 2073 H3983 V2081 M3966 2081 V2089 H3974" stroke="#888" stroke-width="1.8"/></svg>
<div class="t ui" style="left:3152px;top:2127px;font-size:25.9px;color:#222;">2842.14, 1933.90, 0.00</div>
<div class="t ui" style="left:3528px;top:2127px;font-size:25.5px;color:#222;">0 选择的物体</div>
<div class="a" style="left:3693px;top:2119px;width:41px;height:45px;background:#9b9ea4;border-radius:5px"></div>
<div class="a" style="left:3755px;top:2119px;width:42px;height:45px;background:#9b9ea4;border-radius:5px"></div>
<div class="a" style="left:3912px;top:2119px;width:42px;height:45px;background:#9b9ea4;border-radius:5px"></div>
<svg class="a" style="left:3690px;top:2116px" width="314" height="44" viewBox="3690 2116 314 44" fill="none">
<path d="M3702 2128 V2152 H3727 M3702 2141 H3712 V2152" stroke="#444" stroke-width="2.5"/>
<path d="M3779 2130 H3764 V2160 M3789 2141 V2160" stroke="#444" stroke-width="2.5"/><rect x="3780" y="2126" width="11" height="11" stroke="#444" stroke-width="2" />
<path d="M3804 2136 H3822 L3813 2146 Z" fill="#111"/>
<path d="M3862 2144 H3889 L3880 2160 H3853 Z" stroke="#444" stroke-width="2"/><path d="M3860 2158 L3876 2128" stroke="#444" stroke-width="2.5"/><circle cx="3876" cy="2126" r="3.6" fill="#444"/><circle cx="3876" cy="2150" r="4" fill="#e02020"/><path d="M3876 2130 V2146" stroke="#444" stroke-width="1.2" stroke-dasharray="2 2"/>
<rect x="3918" y="2128" width="31" height="26" stroke="#444" stroke-width="2.5"/><rect x="3918" y="2128" width="31" height="6" fill="#444"/><path d="M3923 2140 L3929 2144 L3923 2148 M3931 2149 H3939" stroke="#444" stroke-width="1.8"/>
<path d="M3994 2145 h3 v3 h-3z M3988 2152 h3 v3 h-3z M3994 2152 h3 v3 h-3z" fill="#bbb"/>
</svg>
</body></html>
